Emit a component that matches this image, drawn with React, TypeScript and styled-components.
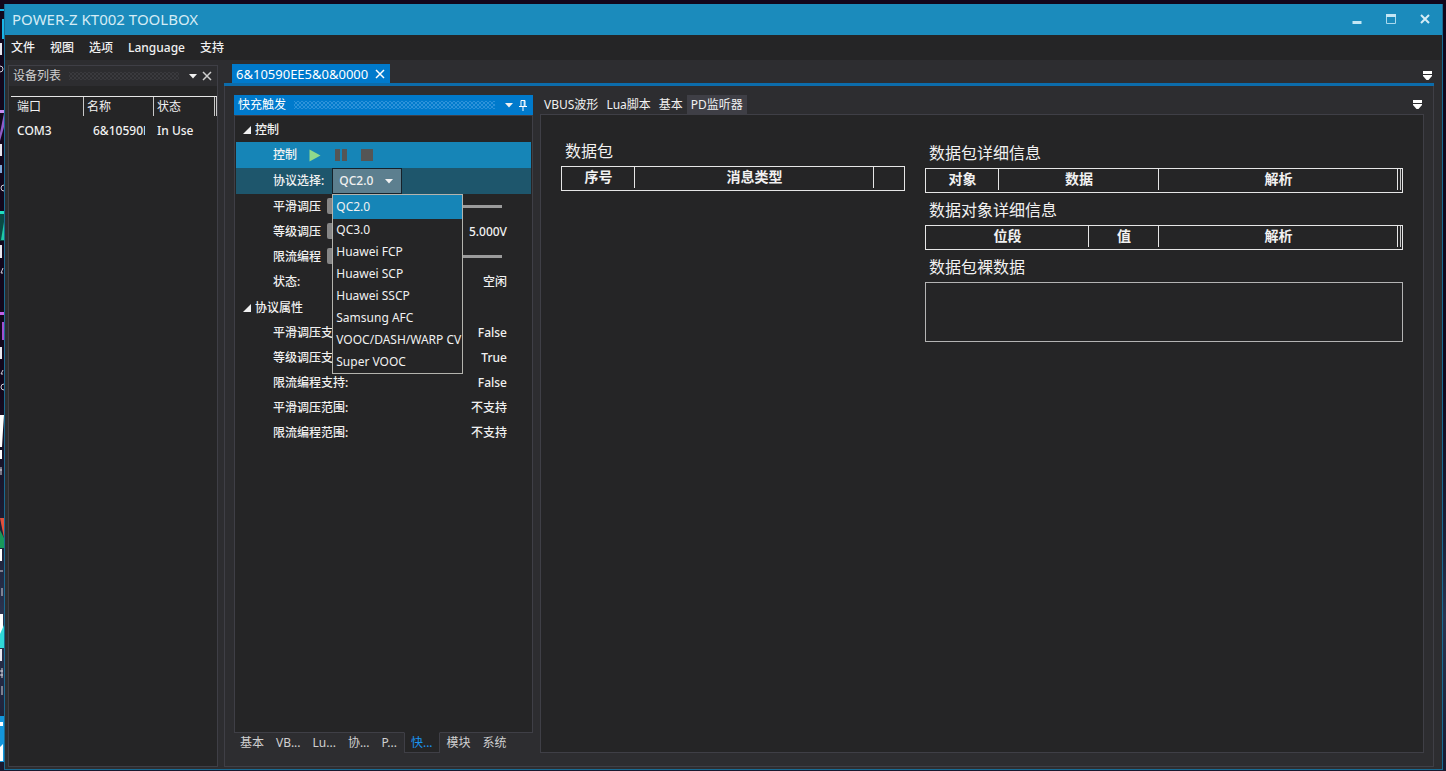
import React, { useState } from "react";
import styled, { createGlobalStyle, css } from "styled-components";

const c = {
  title: "#1b8bbc",
  accent: "#007acc",
  chrome: "#2d2d30",
  panel: "#252526",
  line: "#3f3f46",
  text: "#f1f1f1",
  dim: "#d0d0d0",
};

const Global = createGlobalStyle`
  *, *::before, *::after { box-sizing: border-box; }
  html, body, #root { margin: 0; padding: 0; }
  body {
    background: #10061a;
    color: ${c.text};
    font-family: "Noto Sans", "Noto Sans CJK SC", sans-serif;
    font-size: 12px;
    line-height: 16px;
  }
  button, input, select, textarea { font: inherit; color: inherit; margin: 0; padding: 0; border: 0; background: none; }
  button { cursor: pointer; }
  h2 { margin: 0; font-weight: 400; }
  ul { list-style: none; margin: 0; padding: 0; }
`;

const Desktop = styled.div`
  min-height: 100vh;
  display: grid;
  grid-template-columns: 4px 1fr;
  padding: 4px 3px 1px 0;
  background: linear-gradient(#12071c 0%, #12071c 50%, #1d2138 70%, #2b3450 80%, #191a30 100%);
`;

const Wallpaper = styled.svg`
  width: 4px;
  height: 764px;
  display: block;
`;

const Window = styled.div`
  display: flex;
  flex-direction: column;
  min-width: 0;
  background: ${c.chrome};
  border: 1px solid #1a6a91;
  border-top: 0;
`;

const TitleBar = styled.header`
  display: flex;
  align-items: center;
  justify-content: space-between;
  height: 31px;
  padding: 0 11px 1px 7px;
  background: ${c.title};
  color: #d4ecf5;
  font-size: 15px;
  line-height: 20px;
`;

const WindowButtons = styled.div`
  display: flex;
  gap: 22px;
`;

const IconButton = styled.button`
  display: flex;
  align-items: center;
  justify-content: center;
  width: 12px;
  height: 16px;
  svg { display: block; }
`;

const MenuBar = styled.nav`
  display: flex;
  align-items: center;
  gap: 15px;
  height: 25px;
  padding: 0 6px;
  background: ${c.panel};
  font-weight: 500;
`;

const Workspace = styled.div`
  display: flex;
  flex: 1;
  gap: 6px;
  padding: 5px 8px 2px 3px;
`;

const Sidebar = styled.aside`
  width: 210px;
  flex: none;
  background: ${c.panel};
  border: 1px solid ${c.line};
`;

const PanelHeader = styled.div<{ $active?: boolean }>`
  display: flex;
  align-items: center;
  gap: 8px;
  height: 20px;
  padding: 0 4px;
  background: ${(p) => (p.$active ? c.accent : c.chrome)};
  color: ${(p) => (p.$active ? "#fff" : c.dim)};
`;

const Grip = styled.span<{ $active?: boolean }>`
  flex: 1;
  height: 8px;
  background-image:
    radial-gradient(circle, ${(p) => (p.$active ? "#2c92da" : "#3a3a3e")} 28%, transparent 30%),
    radial-gradient(circle, ${(p) => (p.$active ? "#2c92da" : "#3a3a3e")} 28%, transparent 30%);
  background-size: 4px 4px;
  background-position: 0 0, 2px 2px;
`;

const HeaderButtons = styled.div`
  display: flex;
  gap: 2px;
`;

const DeviceTable = styled.table`
  width: 206px;
  margin: 10px 0 0 2px;
  border-collapse: separate;
  border-spacing: 0;
  table-layout: fixed;
  border-top: 1px solid #e6e6e6;
  th, td {
    padding: 0 0 0 6px;
    font-weight: 400;
    text-align: left;
    white-space: nowrap;
    overflow: hidden;
  }
  th { height: 19px; padding-left: 3px; border-right: 1px solid #c8c8c8; }
  th:first-child, td:first-child { padding-left: 6px; }
  th:last-child { padding: 0; border-right: 1px solid #c8c8c8; }
  td { height: 30px; font-weight: 500; }
  td:nth-child(2) { padding-left: 9px; border-right: 9px solid transparent; }
  td:nth-child(3) { padding-left: 3px; }
`;

const Document = styled.main`
  display: flex;
  flex-direction: column;
  flex: 1;
  min-width: 0;
`;

const DocTabs = styled.div`
  box-sizing: content-box;
  display: flex;
  align-items: flex-end;
  justify-content: space-between;
  height: 18px;
  padding: 0 1px 0 8px;
  border-bottom: 3px solid #0c6cab;
`;

const DocTab = styled.div`
  display: flex;
  align-items: center;
  gap: 6px;
  height: 19px;
  padding: 0 4px;
  background: ${c.accent};
  color: #fff;
  font-size: 13px;
`;

const DocBody = styled.div`
  display: flex;
  flex: 1;
  gap: 7px;
  padding: 9px 9px 13px 9px;
  border: 1px solid ${c.line};
  border-top: 0;
`;

const ToolPane = styled.section`
  display: flex;
  flex-direction: column;
  width: 299px;
  flex: none;
`;

const ToolBody = styled.div`
  flex: 1;
  display: flex;
  flex-direction: column;
  background: ${c.panel};
  border: 1px solid ${c.line};
`;

const GroupHeader = styled.h2`
  display: flex;
  align-items: center;
  gap: 4px;
  height: 26px;
  padding: 2px 0 0 8px;
  font-size: 12px;
  font-weight: 500;
`;

const Row = styled.div<{ $tone?: "selected" | "soft" }>`
  display: flex;
  align-items: center;
  height: 25px;
  margin: 0 1px;
  padding: 0 24px 0 37px;
  font-weight: 500;
  ${(p) => p.$tone && css`
    height: 26px;
    background: ${p.$tone === "selected" ? "#1685b7" : "#1e566c"};
  `}
`;

const Value = styled.output`
  margin-left: auto;
`;

const PlayButtons = styled.div`
  display: flex;
  gap: 14px;
  margin-left: 12px;
`;

const Combo = styled.div`
  position: relative;
  display: flex;
  align-items: center;
  width: 70px;
  height: 26px;
  margin-left: 8px;
  background: #5c7f8f;
  border: 1px solid #16212a;
  > svg { position: absolute; right: 8px; pointer-events: none; }
`;

const ComboSelect = styled.select`
  appearance: none;
  width: 100%;
  height: 24px;
  padding-left: 6px;
`;

const Popup = styled.ul`
  position: absolute;
  z-index: 2;
  top: 25px;
  left: -1px;
  width: 131px;
  background: ${c.panel};
  border: 1px solid #b4b4ae;
  font-weight: 400;
`;

const Option = styled.li<{ $on: boolean }>`
  height: 22px;
  padding: 0 3px;
  line-height: 22px;
  white-space: nowrap;
  &:first-child { height: 24px; line-height: 24px; }
  background: ${(p) => (p.$on ? "#1685b7" : "transparent")};
`;

const Slider = styled.input<{ $short?: boolean }>`
  appearance: none;
  width: ${(p) => (p.$short ? 120 : 175)}px;
  height: 16px;
  margin-left: 6px;
  &::-webkit-slider-runnable-track { height: 3px; background: #9b9b9b; }
  &::-webkit-slider-thumb {
    appearance: none;
    width: 10px;
    height: 16px;
    margin-top: -7px;
    border-radius: 2px;
    background: #868686;
  }
`;

const BottomTabs = styled.div`
  display: flex;
  height: 20px;
`;

const BottomTab = styled.button<{ $on?: boolean }>`
  height: 20px;
  padding: 0 6px;
  color: ${(p) => (p.$on ? "#1a94f0" : c.dim)};
  ${(p) => p.$on && css`
    height: 21px;
    margin: -1px 1px 0;
    background: ${c.panel};
    border: 1px solid ${c.line};
    border-top-color: ${c.panel};
  `}
`;

const ViewPane = styled.section`
  display: flex;
  flex-direction: column;
  flex: 1;
  min-width: 0;
`;

const ViewTabs = styled.div`
  display: flex;
  align-items: center;
  height: 19px;
  padding-right: 1px;
  > :last-child { margin-left: auto; }
`;

const ViewTab = styled.button<{ $on?: boolean }>`
  height: 19px;
  padding: 0 4px;
  color: ${c.text};
  background: ${(p) => (p.$on ? c.line : "transparent")};
`;

const ViewBody = styled.div`
  flex: 1;
  display: grid;
  grid-template-columns: 344fr 478fr;
  align-content: start;
  gap: 20px;
  padding: 26px 20px;
  background: ${c.panel};
  border: 1px solid ${c.line};
`;

const Column = styled.div<{ $lower?: boolean }>`
  display: flex;
  flex-direction: column;
  padding-top: ${(p) => (p.$lower ? 2 : 0)}px;
`;

const SectionTitle = styled.label`
  display: block;
  height: 25px;
  padding-left: 4px;
  font-size: 16px;
  line-height: 20px;
`;

const GridTable = styled.table`
  width: 100%;
  height: 25px;
  margin-bottom: 7px;
  border: 1px solid #e6e6e6;
  border-collapse: separate;
  border-spacing: 0;
  table-layout: fixed;
  th {
    height: 23px;
    padding: 0 0 3px;
    font-size: 14px;
    font-weight: 700;
    line-height: 20px;
    background: linear-gradient(#e6e6e6, #e6e6e6) right top / 1px 21px no-repeat;
  }
  th:last-child { background: none; }
  th.grip { background: linear-gradient(90deg, transparent 2px, #c8c8c8 2px) left top / 3px 21px no-repeat; }
`;

const RawData = styled.textarea`
  display: block;
  width: 100%;
  height: 60px;
  resize: none;
  border: 1px solid #b4b4b4;
  outline: 0;
`;

const Caret = () => (
  <svg width="8" height="5" viewBox="0 0 8 5"><path d="M0 0h8L4 4.6z" fill="#f1f1f1" /></svg>
);
const Cross = ({ size = 10, w = 1.5 }) => (
  <svg width={size} height={size} viewBox="0 0 10 10"><path d="M1 1l8 8M9 1L1 9" stroke="currentColor" strokeWidth={w} /></svg>
);
const Overflow = () => (
  <svg width="9" height="9" viewBox="0 0 9 9"><path d="M0 0h9v3H0zM0 4h9v1L5.5 9h-2L0 5z" fill="#fff" /></svg>
);
const Expander = () => (
  <svg width="8" height="8" viewBox="0 0 8 8"><path d="M8 0v8H0z" fill="#f1f1f1" /></svg>
);
const Pin = () => (
  <svg width="8" height="11" viewBox="0 0 8 11"><path d="M2 6V0.5h4V6M5.2 1v5M0 6.5h8M4 7v4" fill="none" stroke="#fff" /></svg>
);

const menus = ["文件", "视图", "选项", "Language", "支持"];
const protocols = ["QC2.0", "QC3.0", "Huawei FCP", "Huawei SCP", "Huawei SSCP", "Samsung AFC", "VOOC/DASH/WARP CV", "Super VOOC"];
const attributes = [
  ["平滑调压支持:", "False"],
  ["等级调压支持:", "True"],
  ["限流编程支持:", "False"],
  ["平滑调压范围:", "不支持"],
  ["限流编程范围:", "不支持"],
];
const bottomTabs = ["基本", "VB...", "Lu...", "协...", "P...", "快...", "模块", "系统"];
const viewTabs = ["VBUS波形", "Lua脚本", "基本", "PD监听器"];

type Col = { label?: string; width?: string };
const HeaderGrid = ({ id, cols, grip }: { id: string; cols: Col[]; grip?: boolean }) => (
  <GridTable aria-labelledby={id}>
    <colgroup>{cols.map((k, i) => <col key={i} width={k.width} />)}</colgroup>
    <thead><tr>{cols.map((k, i) => <th key={i} className={grip && i === cols.length - 1 ? "grip" : undefined}>{k.label}</th>)}</tr></thead>
  </GridTable>
);

export default function App() {
  const [protocol, setProtocol] = useState("QC2.0");
  return (
    <>
      <Global />
      <Desktop>
        <Wallpaper viewBox="0 4 4 764" aria-hidden="true">
          <path d="M0 9h4v2H0zM2 19h2v20H2z" fill="#19b4e6" />
          <path d="M0 43h2v12H0zM0 144h2v12H0zM0 245h2v13H0zM0 347h2v12H0z" fill="#e8e8f0" />
          <path d="M0 66q3 0 3 3t-3 3M4 185q-3 0-3 3t3 3M3 268l-2 5h2M3 370l-2 4h2M4 384q-3 0-3 3t3 3" fill="none" stroke="#d0d0dc" />
          <path d="M0 110h4v3H0z" fill="#c58cf0" /><path d="M4 113v14l-4 14v-8z" fill="#8f5cc8" />
          <path d="M0 165h2v8H0z" fill="#7fa8d8" />
          <path d="M0 211h4v3H0z" fill="#20e0c0" /><path d="M0 214h4v27H0z" fill="#0a4a44" /><path d="M4 222v18H1z" fill="#20c8a4" />
          <path d="M0 312h4v3H0z" fill="#c060e8" /><path d="M2 322h2v18H2z" fill="#a050d0" />
          <path d="M0 415h4l-1 15-1 17H0zM0 450h2v9H0z" fill="#fff" />
          <path d="M0 470h2M1 467v8M0 571h3M2 588v8" stroke="#d8d8e0" fill="none" />
          <path d="M0 518h4v20z" fill="#e0503c" /><path d="M0 530l4 8v10H0z" fill="#18985a" />
          <path d="M0 549h2v12H0z" fill="#fff" />
          <path d="M0 614h3v18l-3 5z" fill="#fff" /><path d="M0 634l4-9v23H0z" fill="#30d8d8" />
          <path d="M0 649h2v12H0z" fill="#e8e8f0" />
          <path d="M0 671h3M0 675h3M2 668v10M2 686v9" stroke="#d8d8e0" fill="none" />
          <path d="M0 716h4v46H0z" fill="#1496dc" /><path d="M0 722h3v4H0zM0 747l3-3v17H0z" fill="#fff" />
        </Wallpaper>
        <Window>
          <TitleBar>
            <span>POWER-Z KT002 TOOLBOX</span>
            <WindowButtons>
              <IconButton aria-label="Minimize"><svg width="10" height="10" viewBox="0 0 10 10"><path d="M0.5 7h9v3h-9z" fill="#c4e6f4" /></svg></IconButton>
              <IconButton aria-label="Maximize"><svg width="10" height="10" viewBox="0 0 10 10"><path d="M0.5 1h9v8.5h-9z" fill="none" stroke="#a9d9ee" /><path d="M0 0h10v3H0z" fill="#c4e6f4" /></svg></IconButton>
              <IconButton aria-label="Close"><Cross w={2} /></IconButton>
            </WindowButtons>
          </TitleBar>
          <MenuBar>
            {menus.map((m) => <button key={m}>{m}</button>)}
          </MenuBar>
          <Workspace>
            <Sidebar>
              <PanelHeader>
                <span>设备列表</span><Grip />
                <HeaderButtons>
                  <IconButton aria-label="Options"><Caret /></IconButton>
                  <IconButton aria-label="Close panel"><Cross /></IconButton>
                </HeaderButtons>
              </PanelHeader>
              <DeviceTable>
                <colgroup><col width="73" /><col width="70" /><col width="61" /><col width="2" /></colgroup>
                <thead><tr><th>端口</th><th>名称</th><th>状态</th><th /></tr></thead>
                <tbody><tr><td>COM3</td><td>6&amp;10590EE5</td><td>In Use</td><td /></tr></tbody>
              </DeviceTable>
            </Sidebar>
            <Document>
              <DocTabs>
                <DocTab><span>6&amp;10590EE5&amp;0&amp;0000</span><IconButton aria-label="Close tab"><Cross /></IconButton></DocTab>
                <IconButton aria-label="More documents"><Overflow /></IconButton>
              </DocTabs>
              <DocBody>
                <ToolPane>
                  <PanelHeader $active>
                    <span>快充触发</span><Grip $active />
                    <HeaderButtons>
                      <IconButton aria-label="Options"><Caret /></IconButton>
                      <IconButton aria-label="Pin"><Pin /></IconButton>
                    </HeaderButtons>
                  </PanelHeader>
                  <ToolBody>
                    <GroupHeader><Expander />控制</GroupHeader>
                    <Row $tone="selected">
                      <span>控制</span>
                      <PlayButtons>
                        <IconButton aria-label="Start"><svg width="12" height="13" viewBox="0 0 12 13"><path d="M0.5 0.5l11 6-11 6z" fill="#8fd98c" /></svg></IconButton>
                        <IconButton aria-label="Pause"><svg width="12" height="12" viewBox="0 0 12 12"><path d="M0 0h5v12H0zM7 0h5v12H7z" fill="#555" /></svg></IconButton>
                        <IconButton aria-label="Stop"><svg width="12" height="12" viewBox="0 0 12 12"><path d="M0 0h12v12H0z" fill="#555" /></svg></IconButton>
                      </PlayButtons>
                    </Row>
                    <Row $tone="soft">
                      <label htmlFor="protocol">协议选择:</label>
                      <Combo>
                        <ComboSelect id="protocol" value={protocol} onChange={(e) => setProtocol(e.target.value)}>
                          {protocols.map((p) => <option key={p}>{p}</option>)}
                        </ComboSelect>
                        <Caret />
                        <Popup role="listbox">
                          {protocols.map((p) => (
                            <Option key={p} role="option" aria-selected={p === protocol} $on={p === protocol} onClick={() => setProtocol(p)}>{p}</Option>
                          ))}
                        </Popup>
                      </Combo>
                    </Row>
                    <Row><label htmlFor="smooth">平滑调压</label><Slider id="smooth" type="range" defaultValue={0} /></Row>
                    <Row><label htmlFor="step">等级调压</label><Slider id="step" type="range" defaultValue={0} $short /><Value>5.000V</Value></Row>
                    <Row><label htmlFor="limit">限流编程</label><Slider id="limit" type="range" defaultValue={0} /></Row>
                    <Row><span>状态:</span><Value>空闲</Value></Row>
                    <GroupHeader><Expander />协议属性</GroupHeader>
                    {attributes.map(([k, v]) => <Row key={k}><span>{k}</span><Value>{v}</Value></Row>)}
                  </ToolBody>
                  <BottomTabs>
                    {bottomTabs.map((t) => <BottomTab key={t} $on={t === "快..."}>{t}</BottomTab>)}
                  </BottomTabs>
                </ToolPane>
                <ViewPane>
                  <ViewTabs>
                    {viewTabs.map((t) => <ViewTab key={t} $on={t === "PD监听器"}>{t}</ViewTab>)}
                    <IconButton aria-label="More views"><Overflow /></IconButton>
                  </ViewTabs>
                  <ViewBody>
                    <Column>
                      <SectionTitle as="h2" id="packets">数据包</SectionTitle>
                      <HeaderGrid id="packets" cols={[{ label: "序号", width: "73" }, { label: "消息类型" }, { width: "30" }]} />
                    </Column>
                    <Column $lower>
                      <SectionTitle as="h2" id="details">数据包详细信息</SectionTitle>
                      <HeaderGrid id="details" grip cols={[{ label: "对象", width: "73" }, { label: "数据", width: "160" }, { label: "解析" }, { width: "4" }]} />
                      <SectionTitle as="h2" id="objects">数据对象详细信息</SectionTitle>
                      <HeaderGrid id="objects" grip cols={[{ label: "位段", width: "163" }, { label: "值", width: "70" }, { label: "解析" }, { width: "4" }]} />
                      <SectionTitle htmlFor="raw">数据包裸数据</SectionTitle>
                      <RawData id="raw" readOnly />
                    </Column>
                  </ViewBody>
                </ViewPane>
              </DocBody>
            </Document>
          </Workspace>
        </Window>
      </Desktop>
    </>
  );
}
